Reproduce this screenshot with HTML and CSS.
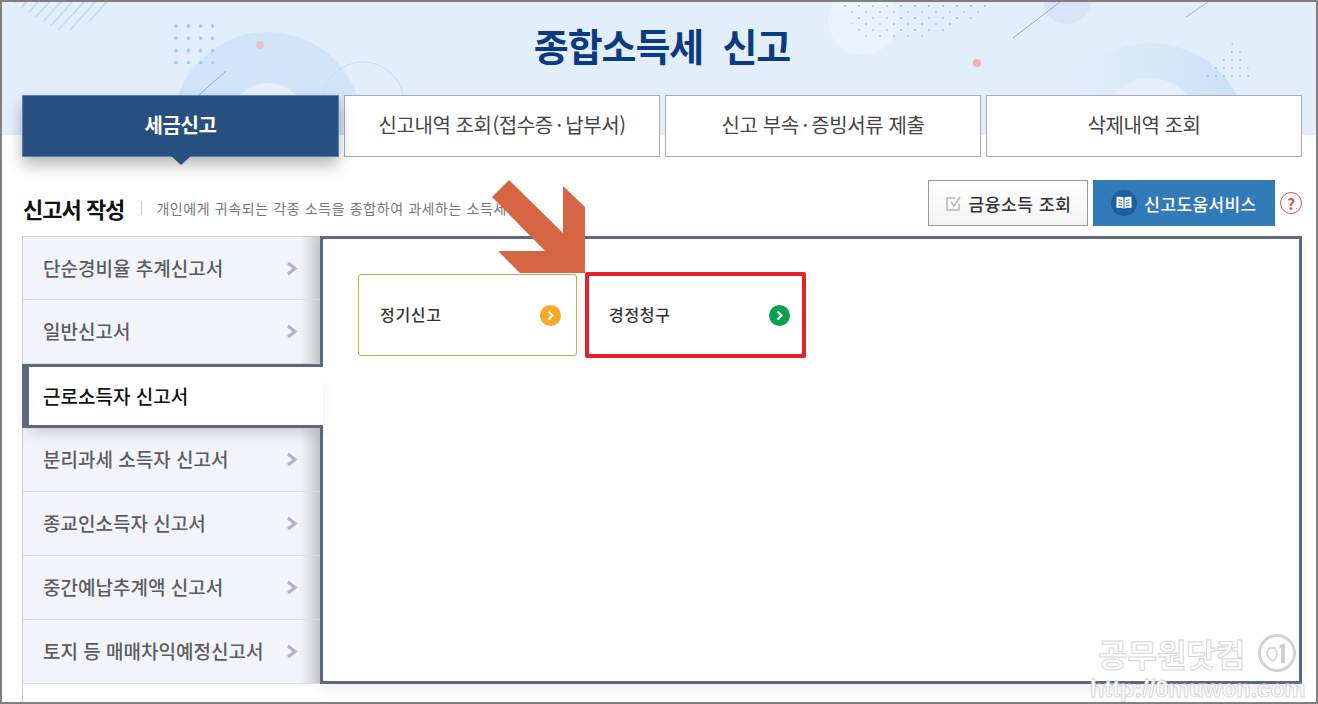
FILE: index.html
```html
<!DOCTYPE html>
<html lang="ko">
<head>
<meta charset="utf-8">
<title>종합소득세 신고</title>
<link rel="stylesheet" href="styles.css">
</head>
<body>
<div class="frame">
  <svg class="hero-art" width="1314" height="133" viewBox="2 2 1314 133" aria-hidden="true">
    <defs>
      <pattern id="grid" x="176" y="26" width="12.3" height="12.3" patternUnits="userSpaceOnUse"><circle cx="0" cy="0" r="1.8" fill="#a3c8e4"/><circle cx="12.3" cy="0" r="1.8" fill="#a3c8e4"/><circle cx="0" cy="12.3" r="1.8" fill="#a3c8e4"/><circle cx="12.3" cy="12.3" r="1.8" fill="#a3c8e4"/></pattern>
      <pattern id="fine" x="843" y="4" width="14" height="12" patternUnits="userSpaceOnUse"><circle cx="2" cy="2" r="1" fill="#a9bfdc"/><circle cx="9" cy="8" r="1" fill="#a9bfdc"/></pattern>
      <pattern id="tri" x="1206" y="42" width="8" height="8" patternUnits="userSpaceOnUse"><circle cx="2" cy="2" r="1" fill="#a8b8cf"/></pattern>
      <pattern id="hatch" width="8.5" height="9" patternUnits="userSpaceOnUse" patternTransform="rotate(42)"><line x1="4" y1="0" x2="4" y2="9" stroke="#a9cbea" stroke-width="1"/></pattern>
      <linearGradient id="fade" gradientUnits="userSpaceOnUse" x1="1070" x2="1240" y1="0" y2="0"><stop offset="0" stop-color="#e3eefb"/><stop offset="1" stop-color="#cbe1f8"/></linearGradient>
    </defs>
    <rect x="2" y="2" width="1314" height="133" fill="#e3eefb"/>
    <polygon points="13,2 117,2 77,30 57,30" fill="url(#hatch)"/>
    <circle cx="267.500" cy="127" r="95" fill="#d0e5f9"/>
    <circle cx="268" cy="122" r="39" fill="#e6f0fb"/>
    <rect x="174" y="24" width="40" height="40" fill="url(#grid)"/>
    <circle cx="260" cy="45" r="4" fill="#e8c0cc"/>
    <circle cx="363" cy="103" r="41" fill="none" stroke="#c8ddf3"/>
    <line x1="199" y1="95" x2="226" y2="71" stroke="#8fb3dc"/>
    <circle cx="863" cy="20" r="35" fill="#eaf2fd"/>
    <polygon points="843,4 996,4 960,25 920,40 870,40 852,24" fill="url(#fine)"/>
    <circle cx="1067" cy="0" r="24" fill="#d9e4f9"/>
    <line x1="1013" y1="38" x2="1060" y2="2" stroke="#8fa9d4"/>
    <line x1="1186" y1="17" x2="1208" y2="2" stroke="#9db4da"/>
    <circle cx="977" cy="63" r="4" fill="#f2b0b6"/>
    <circle cx="1150" cy="142" r="99" fill="url(#fade)"/>
    <circle cx="1150" cy="127" r="49" fill="#e5effb"/>
    <polygon points="1235,40 1254,80 1204,78" fill="url(#tri)"/>
  </svg>

  <h1 class="title">종합소득세&nbsp; 신고</h1>

  <nav class="tabs">
    <a class="tab tab-active">세금신고</a>
    <a class="tab">신고내역 조회&#8202;(접수증&#8201;·&#8201;납부서)</a>
    <a class="tab">신고 부속&#8201;·&#8201;증빙서류 제출</a>
    <a class="tab">삭제내역 조회</a>
  </nav>

  <div class="toolbar">
    <h2 class="heading">신고서 작성</h2>
    <p class="desc">개인에게 귀속되는 각종 소득을 종합하여 과세하는 소득세</p>
    <div class="actions">
      <button class="btn btn-light">
        <svg width="17" height="17" viewBox="0 0 17 17" aria-hidden="true"><path d="M14 9v6H2V3h8" fill="none" stroke="#b5b5b5" stroke-width="1.5"/><path d="M6 7l3 4 6-9" fill="none" stroke="#b5b5b5" stroke-width="1.5"/></svg>
        금융소득 조회
      </button>
      <button class="btn btn-blue">
        <span class="book">
          <svg width="18" height="16" viewBox="0 0 18 16" aria-hidden="true"><path d="M9 3C7 1.6 4 1.4 1.5 2v11C4 12.400 7 12.600 9 14c2-1.400 5-1.600 7.500-1V2C14 1.400 11 1.600 9 3Z" fill="#fff"/><path d="M9 3v11M3.500 5c1.200 0 2.400.2 3.500.7M3.500 7.600c1.200 0 2.400.2 3.500.7M3.500 10.200c1.200 0 2.400.2 3.500.7M14.500 5c-1.200 0-2.400.2-3.500.7M14.500 7.600c-1.200 0-2.400.2-3.500.7M14.500 10.200c-1.200 0-2.400.2-3.500.7" fill="none" stroke="#1c5f9c" stroke-width="1"/></svg>
        </span>
        신고도움서비스
      </button>
      <span class="help">?</span>
    </div>
  </div>

  <div class="workspace">
    <ul class="menu">
      <li class="item">단순경비율 추계신고서<svg class="chev" width="12" height="15" viewBox="0 0 12 15" aria-hidden="true"><path d="M2 2l7 5.500-7 5.500" fill="none" stroke="#b1b5c6" stroke-width="3.200"/></svg></li>
      <li class="item">일반신고서<svg class="chev" width="12" height="15" viewBox="0 0 12 15" aria-hidden="true"><path d="M2 2l7 5.500-7 5.500" fill="none" stroke="#b1b5c6" stroke-width="3.200"/></svg></li>
      <li class="item item-active">근로소득자 신고서</li>
      <li class="item">분리과세 소득자 신고서<svg class="chev" width="12" height="15" viewBox="0 0 12 15" aria-hidden="true"><path d="M2 2l7 5.500-7 5.500" fill="none" stroke="#b1b5c6" stroke-width="3.200"/></svg></li>
      <li class="item">종교인소득자 신고서<svg class="chev" width="12" height="15" viewBox="0 0 12 15" aria-hidden="true"><path d="M2 2l7 5.500-7 5.500" fill="none" stroke="#b1b5c6" stroke-width="3.200"/></svg></li>
      <li class="item">중간예납추계액 신고서<svg class="chev" width="12" height="15" viewBox="0 0 12 15" aria-hidden="true"><path d="M2 2l7 5.500-7 5.500" fill="none" stroke="#b1b5c6" stroke-width="3.200"/></svg></li>
      <li class="item">토지 등 매매차익예정신고서<svg class="chev" width="12" height="15" viewBox="0 0 12 15" aria-hidden="true"><path d="M2 2l7 5.500-7 5.500" fill="none" stroke="#b1b5c6" stroke-width="3.200"/></svg></li>
    </ul>
    <section class="panel">
      <a class="card card-gold">정기신고
        <span class="dot dot-orange"><svg width="9" height="11" viewBox="0 0 9 11" aria-hidden="true"><path d="M2.500 1.500l4 4-4 4" fill="none" stroke="#fff" stroke-width="2"/></svg></span>
      </a>
      <a class="card card-red">경정청구
        <span class="dot dot-green"><svg width="9" height="11" viewBox="0 0 9 11" aria-hidden="true"><path d="M2.500 1.500l4 4-4 4" fill="none" stroke="#fff" stroke-width="2"/></svg></span>
      </a>
    </section>
  </div>

  <svg class="arrow" width="95" height="100" viewBox="0 0 95 100" aria-hidden="true"><polygon points="2,17 19,0 73,53 73,6 95,27 95,93 30,93 8,71 55,71" fill="#d66544" transform="translate(-2 0)"/></svg>

  <div class="mark">
    <div class="mark-row">
      <span class="mark-name">공무원닷컴</span>
      <svg width="40" height="40" viewBox="0 0 40 40" aria-hidden="true"><circle cx="20" cy="20" r="17.500" fill="none" stroke="#d2d2d2" stroke-width="3"/><path d="M13 15c-5 3-3 10 3 13 4-3 5-9 2-13Z" fill="none" stroke="#d2d2d2" stroke-width="1.500"/><path d="M23 12l5-2v20h-4V15l-2 1Z" fill="#cfcfcf"/></svg>
    </div>
    <div class="mark-url">http://0muwon.com</div>
  </div>
</div>
</body>
</html>
```

FILE: styles.css
```css
* { box-sizing: border-box; }
html, body { margin: 0; padding: 0; }
body { font-family: "Noto Sans CJK KR", "Noto Sans", sans-serif; background: #fff; }

.frame {
  position: relative;
  width: 1318px;
  height: 704px;
  border: 2px solid #808080;
  padding: 0 14px 0 20px;
  overflow: hidden;
  background: #fff;
}
.hero-art { position: absolute; left: 0; top: 0; display: block; }

.title {
  position: relative;
  margin: 0;
  height: 93px;
  padding-top: 13px;
  text-align: center;
  font-size: 38px;
  line-height: 60px;
  font-weight: 700;
  letter-spacing: -1.05px;
  color: #0a3a80;
}

.tabs { position: relative; display: flex; gap: 5px; height: 62px; }
.tab {
  flex: 1 1 0;
  display: flex;
  align-items: center;
  justify-content: center;
  padding-bottom: 3px;
  background: #fff;
  border: 1px solid #a9abb0;
  font-size: 20px;
  letter-spacing: -0.4px;
  color: #444;
}
.tab-active {
  position: relative;
  flex: 0 0 317px;
  background: #275080;
  border-color: #5d7ea6;
  color: #fff;
  font-weight: 700;
  box-shadow: 0 8px 14px rgba(0, 0, 0, 0.28);
}
.tab-active::after {
  content: "";
  position: absolute;
  left: 50%;
  top: 100%;
  margin-left: -10px;
  border-style: solid;
  border-width: 9px 10px 0;
  border-color: #275080 transparent transparent;
}

.toolbar { position: relative; display: flex; align-items: center; height: 46px; margin-top: 23px; margin-bottom: 10px; }
.heading {
  margin: 10px 0 0 1px;
  font-size: 22px;
  font-weight: 700;
  letter-spacing: -1px;
  color: #111;
  line-height: 40px;
}
.desc {
  margin: 10px 0 0 17px;
  padding-left: 15px;
  font-size: 14px;
  letter-spacing: 0.6px;
  color: #777;
  position: relative;
  white-space: nowrap;
}
.desc::before {
  content: "";
  position: absolute;
  left: 0;
  top: 3px;
  bottom: 3px;
  border-left: 1px solid #ccc;
}
.actions { position: absolute; right: 0; top: 0; display: flex; align-items: center; gap: 5px; height: 100%; }
.btn {
  display: flex;
  align-items: center;
  justify-content: center;
  height: 46px;
  border: 1px solid #999;
  font-family: inherit;
  font-size: 17px;
  font-weight: 500;
  padding: 0;
}
.btn-light {
  width: 160px;
  gap: 7px;
  letter-spacing: 0.6px;
  background: linear-gradient(#fff, #f3f3f3);
  color: #333;
}
.btn-blue {
  width: 182px;
  gap: 7px;
  letter-spacing: 0.4px;
  background: #337ab9;
  border-color: #337ab9;
  color: #fff;
}
.book {
  width: 26px;
  height: 26px;
  border-radius: 50%;
  background: #1c5f9c;
  display: flex;
  align-items: center;
  justify-content: center;
}
.help {
  width: 22px;
  height: 22px;
  border: 1.5px solid #d9534f;
  border-radius: 50%;
  display: flex;
  align-items: center;
  justify-content: center;
  color: #d9534f;
  font-size: 16px;
  font-weight: 700;
}

.workspace { display: flex; align-items: flex-start; }
.menu {
  width: 301px;
  flex: none;
  margin: 0;
  padding: 0;
  list-style: none;
  border-left: 1px solid #ccc;
  border-top: 1px solid #ccc;
  height: 480px;
}
.item {
  position: relative;
  display: flex;
  align-items: center;
  justify-content: space-between;
  width: 300px;
  height: 64px;
  padding: 0 25px 2px 20px;
  border-bottom: 1px solid #dcdde2;
  background: linear-gradient(90deg, #f2f4fa 277px, #c9cac9 297px);
  font-size: 19px;
  font-weight: 500;
  letter-spacing: 0;
  color: #5c5c60;
}
.item:first-child { height: 63px; }
.chev { flex: none; margin-top: 2px; }
.item-active {
  z-index: 2;
  margin-left: -1px;
  width: 301px;
  background: #fff;
  border: 3px solid #5a6880;
  border-left-width: 7px;
  border-right: 0;
  color: #111;
  padding-left: 14px;
  padding-bottom: 2px;
  box-shadow: 0 10px 14px -6px rgba(0, 0, 0, 0.18);
}

.panel {
  position: relative;
  z-index: 1;
  flex: 1;
  height: 448px;
  margin-left: -3px;
  display: flex;
  align-items: flex-start;
  gap: 8px;
  padding: 33px 35px;
  background: #fff;
  border: 3px solid #5a6880;
  box-shadow: 0 6px 10px rgba(0, 0, 0, 0.07);
}
.card {
  display: flex;
  align-items: center;
  justify-content: space-between;
  font-size: 16px;
  font-weight: 500;
  letter-spacing: 0.7px;
  color: #333;
  line-height: 22px;
}
.card-gold {
  width: 219px;
  height: 82px;
  margin-top: 2px;
  padding: 0 15px 2px 21px;
  border: 1px solid #c8a94a;
  border-radius: 3px;
}
.card-red {
  width: 221px;
  height: 86px;
  padding: 0 12px 2px 20px;
  border: 4px solid #e8202e;
  border-radius: 2px;
}
.dot {
  width: 21px;
  height: 21px;
  border-radius: 50%;
  display: flex;
  align-items: center;
  justify-content: center;
  margin-top: 2px;
}
.dot-orange { background: #f9a826; }
.dot-green { background: #0ba14f; }

.arrow { position: absolute; left: 490px; top: 178px; z-index: 3; }

.mark { position: absolute; z-index: 4; left: 1086px; top: 629px; color: #fff; }
.mark-row { display: flex; align-items: center; gap: 12px; margin-left: 10px; }
.mark-name {
  font-size: 32px;
  font-weight: 700;
  line-height: 44px;
  letter-spacing: 0;
  color: #fff;
  -webkit-text-stroke: 1px #d6d6d6;
}
.mark-url {
  font-family: "Liberation Sans", sans-serif;
  font-size: 23.5px;
  font-weight: 700;
  line-height: 24px;
  margin-top: 2px;
  margin-left: 2px;
  color: #fff;
  -webkit-text-stroke: 1px #d6d6d6;
}
```
